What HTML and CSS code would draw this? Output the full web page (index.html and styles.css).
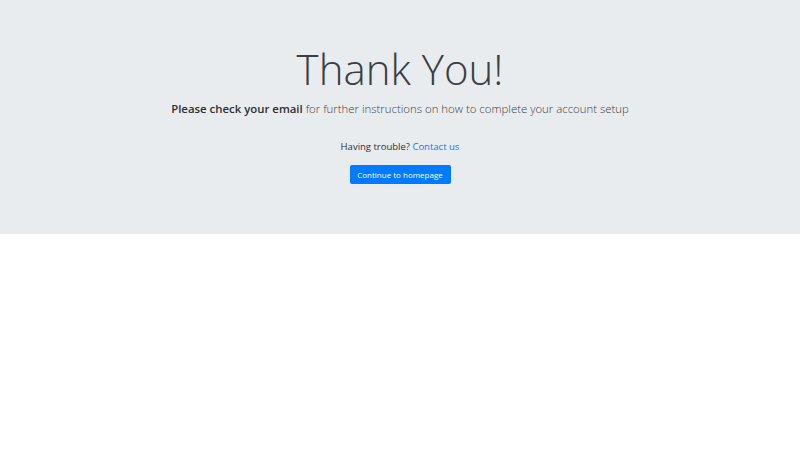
FILE: index.html
```html
<!DOCTYPE html>
<html lang="en">
<head>
<meta charset="utf-8">
<title>Thank You</title>
<link rel="stylesheet" href="styles.css">
</head>
<body>
<div class="jumbotron">
  <h1 class="display">Thank You!</h1>
  <p class="lead"><strong>Please check your email</strong> for further instructions on how to complete your account setup</p>
  <hr class="rule">
  <p class="trouble">Having trouble? <a href="#" class="link">Contact us</a></p>
  <a href="#" class="btn">Continue to homepage</a>
</div>
</body>
</html>
```
FILE: styles.css
```css
html, body {
  margin: 0;
  padding: 0;
  background: #ffffff;
  font-family: "Open Sans", "Liberation Sans", sans-serif;
  color: #212529;
}
.jumbotron {
  background: #e9ecef;
  height: 234px;
  box-sizing: border-box;
  padding-top: 44px;
  display: flex;
  flex-direction: column;
  align-items: center;
  text-align: center;
}
.display {
  margin: 0;
  font-size: 42px;
  font-weight: 300;
  line-height: 1.2;
  color: #3a3f44;
}
.lead {
  margin: 0;
  margin-top: 6px;
  font-size: 11.4px;
  font-weight: 300;
  line-height: 1.5;
  color: #3a3f44;
}
.lead strong {
  font-weight: 600;
  color: #2b2f33;
}
.rule {
  width: 0;
  border: 0;
  margin: 14px 0 0 0;
}
.trouble {
  margin: 8px 0 0 0;
  font-size: 9.5px;
  line-height: 1.5;
  color: #2b2f33;
}
.link {
  color: #007bff;
  text-decoration: none;
}
.btn {
  margin-top: 11px;
  display: inline-block;
  background: #007bff;
  color: #ffffff;
  font-size: 8px;
  line-height: 19px;
  height: 19px;
  width: 101px;
  border-radius: 2px;
  text-decoration: none;
}
```
